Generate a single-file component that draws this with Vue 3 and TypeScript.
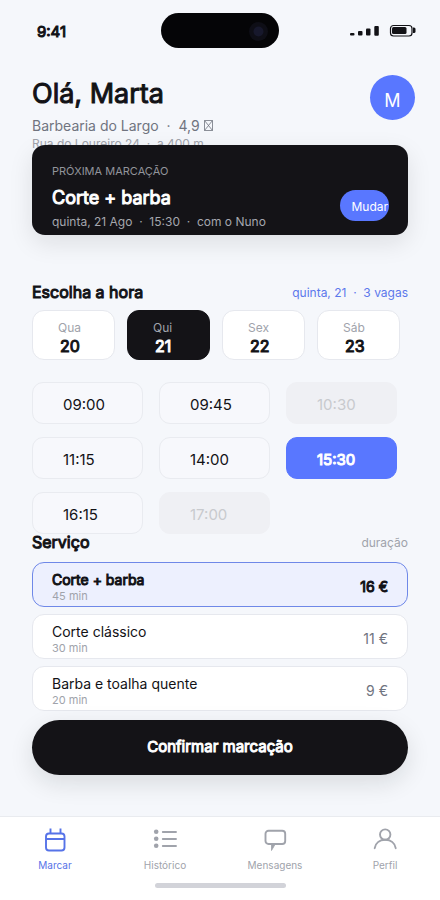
<script setup lang="ts">
import { ref } from 'vue'

interface Day { label: string; date: number }
interface Slot { time: string; taken?: boolean }
interface Service { name: string; minutes: number; price: number }
interface Tab { id: string; label: string }

const days: Day[] = [
  { label: 'Qua', date: 20 },
  { label: 'Qui', date: 21 },
  { label: 'Sex', date: 22 },
  { label: 'Sáb', date: 23 },
]
const slots: Slot[] = [
  { time: '09:00' },
  { time: '09:45' },
  { time: '10:30', taken: true },
  { time: '11:15' },
  { time: '14:00' },
  { time: '15:30' },
  { time: '16:15' },
  { time: '17:00', taken: true },
]
const services: Service[] = [
  { name: 'Corte + barba', minutes: 45, price: 16 },
  { name: 'Corte clássico', minutes: 30, price: 11 },
  { name: 'Barba e toalha quente', minutes: 20, price: 9 },
]
const tabs: Tab[] = [
  { id: 'book', label: 'Marcar' },
  { id: 'history', label: 'Histórico' },
  { id: 'messages', label: 'Mensagens' },
  { id: 'profile', label: 'Perfil' },
]

const day = ref(21)
const slot = ref('15:30')
const service = ref('Corte + barba')
const tab = ref('book')
</script>

<template>
  <div class="screen">
    <div class="status">
      <span class="clock heavy">9:41</span>
      <svg class="island" viewBox="0 0 118 35" aria-hidden="true">
        <rect width="118" height="35" rx="17.5" fill="#050507" />
        <circle cx="97.500" cy="18.500" r="9.500" fill="#0e0e16" />
        <circle cx="97.500" cy="18.500" r="5" fill="#17182c" />
      </svg>
      <svg class="indicators" viewBox="0 0 66 14" aria-hidden="true">
        <g fill="#121216">
          <rect x="0" y="9" width="4.500" height="2.500" rx="1" />
          <rect x="8" y="7" width="4.500" height="4.500" rx="1" />
          <rect x="16" y="4.500" width="4.500" height="7" rx="1" />
          <rect x="24.300" y="2" width="4.500" height="9.800" rx="1" />
          <rect x="42" y="3" width="14.500" height="7" rx="1.500" />
          <path d="M63 3.500h1q1.500 0 1.500 1.500v2.500q0 1.500-1.500 1.500h-1z" />
        </g>
        <rect x="40.500" y="1.500" width="21.500" height="10.500" rx="3" fill="none" stroke="#121216" stroke-width="1.200" />
      </svg>
    </div>

    <main class="content">
      <header class="greeting">
        <div>
          <h1 class="heavy">Olá, Marta</h1>
          <p class="shop">
            Barbearia do Largo &nbsp;·&nbsp; 4,9
            <svg class="rating" viewBox="0 0 9 11" aria-hidden="true">
              <path d="M.5.500h8v10h-8zM.5.500l8 10M8.500.500l-8 10" fill="none" stroke="currentColor" stroke-width=".8" />
            </svg>
          </p>
          <p class="address">Rua do Loureiro 24 &nbsp;·&nbsp; a 400 m</p>
        </div>
        <button class="avatar" type="button">M</button>
      </header>

      <section class="next">
        <div>
          <p class="eyebrow">PRÓXIMA MARCAÇÃO</p>
          <h2 class="heavy">Corte + barba</h2>
          <p class="when">quinta, 21 Ago &nbsp;·&nbsp; 15:30 &nbsp;·&nbsp; com o Nuno</p>
        </div>
        <button class="change" type="button">Mudar</button>
      </section>

      <div class="heading">
        <h2 class="heavy">Escolha a hora</h2>
        <span class="vacancies">quinta, 21 &nbsp;·&nbsp; 3 vagas</span>
      </div>

      <div class="days">
        <button
          v-for="d in days"
          :key="d.date"
          type="button"
          class="day"
          :class="{ selected: d.date === day }"
          :aria-pressed="d.date === day"
          @click="day = d.date"
        >
          <span class="weekday">{{ d.label }}</span>
          <span class="date heavy">{{ d.date }}</span>
        </button>
      </div>

      <div class="slots">
        <button
          v-for="s in slots"
          :key="s.time"
          type="button"
          class="slot"
          :class="{ selected: s.time === slot, heavy: s.time === slot }"
          :aria-pressed="s.time === slot"
          :disabled="s.taken"
          @click="slot = s.time"
        >{{ s.time }}</button>
      </div>

      <div class="heading service-heading">
        <h2 class="heavy">Serviço</h2>
        <span class="hint">duração</span>
      </div>

      <div class="services">
        <button
          v-for="s in services"
          :key="s.name"
          type="button"
          class="service"
          :class="{ selected: s.name === service }"
          :aria-pressed="s.name === service"
          @click="service = s.name"
        >
          <span class="details">
            <span class="name" :class="{ heavy: s.name === service }">{{ s.name }}</span>
            <span class="minutes">{{ s.minutes }} min</span>
          </span>
          <span class="price" :class="{ heavy: s.name === service }">{{ s.price }} €</span>
        </button>
      </div>

      <button class="confirm heavy" type="button">Confirmar marcação</button>
    </main>

    <nav class="tabbar">
      <div class="tabs">
        <button
          v-for="t in tabs"
          :key="t.id"
          type="button"
          class="tab"
          :class="{ active: t.id === tab }"
          @click="tab = t.id"
        >
          <svg viewBox="0 0 28 28" fill="none" stroke="currentColor" stroke-width="1.900" stroke-linecap="round" stroke-linejoin="round" aria-hidden="true">
            <template v-if="t.id === 'book'">
              <rect x="5" y="7.500" width="18.500" height="17" rx="3" />
              <path d="M5 13h18.500M9.500 2.500v5M19.500 2.500v5" stroke-linecap="butt" />
            </template>
            <template v-else-if="t.id === 'history'">
              <g fill="currentColor" stroke="none">
                <circle cx="5.200" cy="5.800" r="2.300" />
                <circle cx="5.200" cy="12.800" r="2.300" />
                <circle cx="5.200" cy="19.800" r="2.300" />
              </g>
              <path d="M11.800 6h13.200M11.800 13h13.200M11.800 20h13.200" />
            </template>
            <template v-else-if="t.id === 'messages'">
              <rect x="4.500" y="4.800" width="19.700" height="13.200" rx="3" />
              <path d="M10.500 18.500v6l3.500-6z" fill="currentColor" stroke-width=".8" />
            </template>
            <template v-else>
              <circle cx="14.200" cy="8.600" r="5.200" />
              <path d="M3.700 22.200c.8-5.300 5.200-8.400 10.500-8.400s9.700 3.100 10.500 8.400" />
            </template>
          </svg>
          <span>{{ t.label }}</span>
        </button>
      </div>
      <div class="home-bar"></div>
    </nav>
  </div>
</template>

<style>
body {
  background: #f5f7fb;
}
</style>

<style scoped>
.screen {
  display: flex;
  flex-direction: column;
  min-height: 100vh;
  background: #f5f7fb;
  color: #121216;
  font-family: Inter, "Liberation Sans", sans-serif;
}
h1, h2, p {
  margin: 0;
}
h2 {
  font-size: 16px;
  line-height: 24px;
  font-weight: 400;
}
button {
  margin: 0;
  padding: 0;
  border: 0;
  font: inherit;
  color: inherit;
  cursor: pointer;
}
/* Emphasis keeps the regular letterforms and thickens their outline. */
.heavy {
  font-weight: 400;
  -webkit-text-stroke: 1px currentColor;
}

.status {
  display: grid;
  grid-template-columns: 1fr auto 1fr;
  align-items: center;
  padding: 13px 24px 0;
}
.clock {
  padding: 2px 0 0 13px;
  font-size: 15px;
  line-height: 20px;
}
.island {
  width: 118px;
  height: 35px;
}
.indicators {
  width: 66px;
  height: 14px;
  justify-self: end;
}

.content {
  display: flex;
  flex-direction: column;
  padding: 27px 32px 40px;
}
.greeting {
  display: flex;
  justify-content: space-between;
  align-items: flex-start;
  margin-right: -7px;
}
h1 {
  padding-top: 3px;
  margin-bottom: 6px;
  font-size: 27px;
  line-height: 32px;
}
.shop {
  font-size: 14px;
  line-height: 20px;
  color: #70747f;
}
.rating {
  width: 9px;
  height: 11px;
}
.address {
  font-size: 12px;
  line-height: 15px;
  color: #a0a3ab;
}
.avatar {
  width: 45px;
  height: 45px;
  padding-top: 6px;
  border-radius: 50%;
  background: #5977ff;
  color: #fff;
  font-size: 18px;
}

.next {
  position: relative;
  display: flex;
  justify-content: space-between;
  align-items: flex-end;
  margin-top: -6px;
  padding: 18px 19px 5px 20px;
  border-radius: 13px;
  background: #141317;
  box-shadow: 0 8px 24px rgba(20, 24, 24, 0.1);
}
.eyebrow {
  margin-bottom: 7px;
  font-size: 11px;
  line-height: 16px;
  color: #92949b;
}
.next h2 {
  margin-bottom: 4px;
  font-size: 18px;
  color: #fff;
}
.when {
  font-size: 12px;
  line-height: 16px;
  color: #a5a7ae;
}
.change {
  height: 31px;
  margin-bottom: 9px;
  padding: 2px 1px 0 11px;
  border-radius: 16px;
  background: #5977ff;
  color: #fff;
  font-size: 12px;
  white-space: nowrap;
}

.heading {
  display: flex;
  justify-content: space-between;
  align-items: center;
  margin-top: 45px;
}
.vacancies {
  font-size: 12px;
  color: #5c78ec;
}
.days {
  display: grid;
  grid-template-columns: repeat(4, 1fr);
  gap: 12px;
  margin: 6px 8px 0 0;
}
.day {
  display: flex;
  flex-direction: column;
  align-items: flex-start;
  padding: 9px 0 3px 25px;
  border: 1px solid #e6e8ee;
  border-radius: 12px;
  background: #fff;
}
.weekday {
  font-size: 12px;
  line-height: 16px;
  color: #a0a3ab;
}
.date {
  padding-left: 2px;
  font-size: 16px;
  line-height: 20px;
}
.day.selected {
  border-color: #141317;
  background: #141317;
  color: #fff;
}

.slots {
  display: grid;
  grid-template-columns: repeat(3, 1fr);
  gap: 13px 16px;
  margin: 22px 11px 0 0;
}
.slot {
  padding: 12px 0 8px 30px;
  border: 1px solid #e9ebf0;
  border-radius: 11px;
  background: #f7f8fc;
  font-size: 15px;
  line-height: 20px;
  text-align: left;
}
.slot:disabled {
  border-color: #eff0f4;
  background: #eff0f4;
  color: #c8cace;
}
.slot.selected {
  border-color: #5977ff;
  background: #5977ff;
  color: #fff;
}

.service-heading {
  position: relative;
  margin-top: -4px;
}
.hint {
  font-size: 12px;
  color: #a0a3ab;
}
.services {
  display: flex;
  flex-direction: column;
  gap: 7px;
  margin-top: 8px;
}
.service {
  display: flex;
  justify-content: space-between;
  align-items: center;
  padding: 8px 19px 3px;
  border: 1px solid #e6e8ee;
  border-radius: 12px;
  background: #fff;
  text-align: left;
}
.service.selected {
  border-color: #6f88e8;
  background: #edf0fe;
}
.details {
  display: flex;
  flex-direction: column;
}
.name {
  font-size: 14px;
  line-height: 18px;
}
.minutes {
  font-size: 11px;
  line-height: 14px;
  color: #a0a3ab;
}
.price {
  font-size: 14px;
  line-height: 18px;
  color: #70747f;
}
.selected .price {
  color: #121216;
}

.confirm {
  position: relative;
  margin-top: 9px;
  padding: 17px 0 18px;
  border-radius: 28px;
  background: #141317;
  box-shadow: 0 8px 24px rgba(20, 24, 24, 0.12);
  color: #fff;
  font-size: 15px;
  line-height: 20px;
}

.tabbar {
  display: flex;
  flex-direction: column;
  align-items: center;
  margin-top: auto;
  padding: 9px 0 12px;
  border-top: 1px solid #e9ebef;
  background: #fff;
}
.tabs {
  display: grid;
  grid-template-columns: repeat(4, 1fr);
  align-self: stretch;
}
.tab {
  display: flex;
  flex-direction: column;
  align-items: center;
  gap: 4px;
  background: none;
  color: #a0a3ab;
  font-size: 10px;
  line-height: 14px;
}
.tab svg {
  width: 28px;
  height: 28px;
}
.tab.active {
  color: #5673e8;
}
.home-bar {
  width: 131px;
  height: 5px;
  margin-top: 11px;
  border-radius: 3px;
  background: #d2d3d9;
}
</style>
